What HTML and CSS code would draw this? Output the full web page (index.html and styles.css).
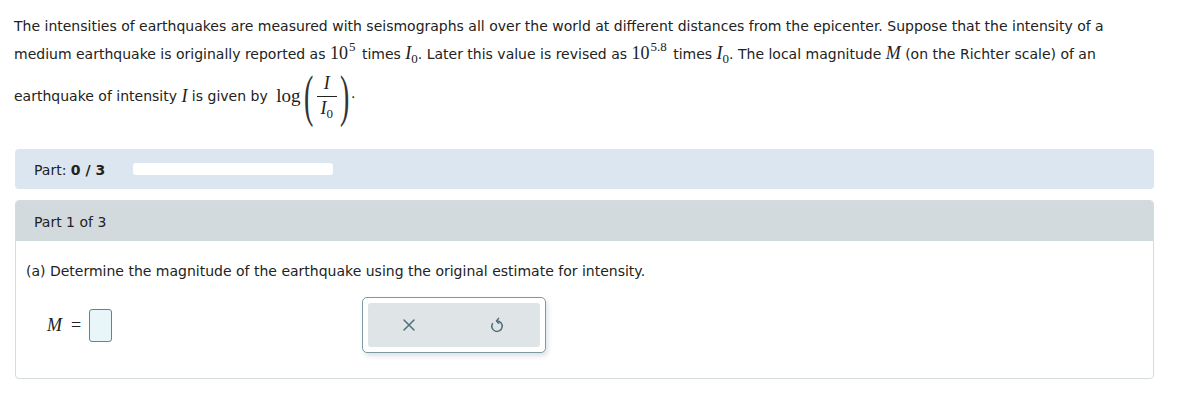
FILE: index.html
```html
<!DOCTYPE html>
<html>
<head>
<meta charset="utf-8">
<link rel="stylesheet" href="styles.css">
</head>
<body>
<div class="problem">
  <p class="line">The intensities of earthquakes are measured with seismographs all over the world at different distances from the epicenter. Suppose that the intensity of a</p>
  <p class="line">medium earthquake is originally reported as <span class="m">10<sup class="sup">5</sup></span> times <span class="m"><i>I</i><sub class="sub">0</sub></span>. Later this value is revised as <span class="m">10<sup class="sup">5.8</sup></span> times <span class="m"><i>I</i><sub class="sub">0</sub></span>. The local magnitude <span class="m"><i>M</i></span> (on the Richter scale) of an</p>
  <p class="line3">earthquake of intensity <span class="m"><i>I</i></span> is given by <span class="m log">log</span><span class="paren">(</span><span class="frac"><span class="num"><i>I</i></span><span class="den"><i>I</i><sub class="sub2">0</sub></span></span><span class="paren">)</span><span class="dot">.</span></p>
</div>

<div class="partbar">
  <span>Part: <b>0 / 3</b></span>
  <span class="progress"></span>
</div>

<div class="card">
  <div class="card-head">Part 1 of 3</div>
  <div class="card-body">
    <p class="question">(a) Determine the magnitude of the earthquake using the original estimate for intensity.</p>
    <div class="answer-row">
      <div class="answer"><span class="m"><i>M</i></span><span class="eq">=</span><span class="input"></span></div>
      <div class="tools">
        <div class="tools-inner">
          <svg class="icon" width="14" height="14" viewBox="0 0 14 14"><path d="M2 2 L12 12 M12 2 L2 12" stroke="#4f6f7c" stroke-width="1.5" fill="none" stroke-linecap="round"/></svg>
          <svg class="icon" width="16" height="18" viewBox="0 0 16 18"><path d="M8 5 A5.2 5.2 0 1 1 3.5 7.6" stroke="#4f6f7c" stroke-width="1.5" fill="none" stroke-linecap="round"/><path d="M9.6 2.4 L7.5 5 L9.7 7.2" stroke="#4f6f7c" stroke-width="1.5" fill="none" stroke-linecap="round" stroke-linejoin="round"/></svg>
        </div>
      </div>
    </div>
  </div>
</div>
</body>
</html>
```

FILE: styles.css
```css
html, body {
  margin: 0;
  padding: 0;
  background: #ffffff;
}
body {
  font-family: "DejaVu Sans", Verdana, sans-serif;
  font-size: 14px;
  color: #222222;
}
.problem {
  padding: 13px 14px 0 14px;
}
.line {
  margin: 0;
  line-height: 27px;
  height: 27px;
  white-space: nowrap;
}
.line3 {
  margin: 0;
  display: flex;
  align-items: center;
  height: 58px;
  white-space: pre;
}
.m {
  font-family: "Liberation Serif", "Times New Roman", serif;
  font-size: 18px;
}
.m i {
  font-style: italic;
}
.sup {
  font-size: 13px;
  vertical-align: 8px;
  line-height: 0;
  margin-left: 1px;
  margin-right: 2px;
}
.sub {
  font-size: 13px;
  vertical-align: -4px;
  line-height: 0;
}
.log {
  margin-left: 4px;
  margin-right: 2px;
  font-size: 19px;
}
.paren {
  display: inline-block;
  font-family: "Liberation Serif", serif;
  font-size: 40px;
  transform: scale(0.7, 1.45);
  line-height: 1;
  color: #333;
}
.frac {
  display: inline-flex;
  flex-direction: column;
  align-items: center;
  font-family: "Liberation Serif", serif;
  font-size: 18px;
  line-height: 21px;
  margin: 0 1px;
}
.num {
  border-bottom: 1px solid #222;
  padding: 0 1px 2px;
  width: 18px;
  text-align: center;
}
.den {
  padding-top: 1px;
}
.sub2 {
  font-size: 13px;
  vertical-align: -4px;
  line-height: 0;
}
.dot {
  font-size: 14px;
  margin-left: 0px;
  margin-bottom: 6px;
}

.partbar {
  margin: 24px 36px 0 15px;
  height: 40px;
  background: #dbe6f0;
  border-radius: 4px;
  display: flex;
  align-items: center;
  padding-left: 19px;
  box-sizing: border-box;
}
.partbar span:first-child {
  padding-top: 2px;
}
.partbar b {
  font-weight: bold;
}
.progress {
  display: block;
  margin-left: 28px;
  width: 200px;
  height: 12px;
  background: #ffffff;
  border-radius: 3px;
}

.card {
  margin: 11px 36px 0 15px;
  border: 1px solid #d3dbde;
  border-radius: 4px;
  overflow: hidden;
  height: 179px;
  box-sizing: border-box;
}
.card-head {
  background: #d2dadd;
  height: 41px;
  display: flex;
  align-items: center;
  padding-left: 19px;
  padding-top: 3px;
  box-sizing: border-box;
  margin: -1px -1px 0 -1px;
}
.card-body {
  padding: 21px 10px 0 10px;
}
.question {
  margin: 0;
  line-height: 18px;
}
.answer-row {
  display: flex;
  align-items: center;
  margin-top: 17px;
}
.answer {
  display: flex;
  align-items: center;
  width: 336px;
  padding-left: 21px;
  box-sizing: border-box;
}
.eq {
  font-family: "Liberation Serif", serif;
  font-size: 18px;
  margin: 0 8px 0 9px;
}
.input {
  display: block;
  width: 23px;
  height: 33px;
  box-sizing: border-box;
  border: 1.5px solid #4c8d9b;
  border-radius: 3px;
  background: #e8f6f9;
}
.tools {
  width: 184px;
  height: 56px;
  box-sizing: border-box;
  border: 1px solid #7d99a4;
  border-radius: 5px;
  padding: 5px;
  box-shadow: 2px 3px 5px rgba(120, 140, 150, 0.25);
  background: #fff;
}
.tools-inner {
  height: 100%;
  background: #dfe5e7;
  border-radius: 3px;
  display: flex;
  align-items: center;
  justify-content: space-between;
  padding: 0 35px 0 34px;
}
.icon {
  display: block;
}
```
